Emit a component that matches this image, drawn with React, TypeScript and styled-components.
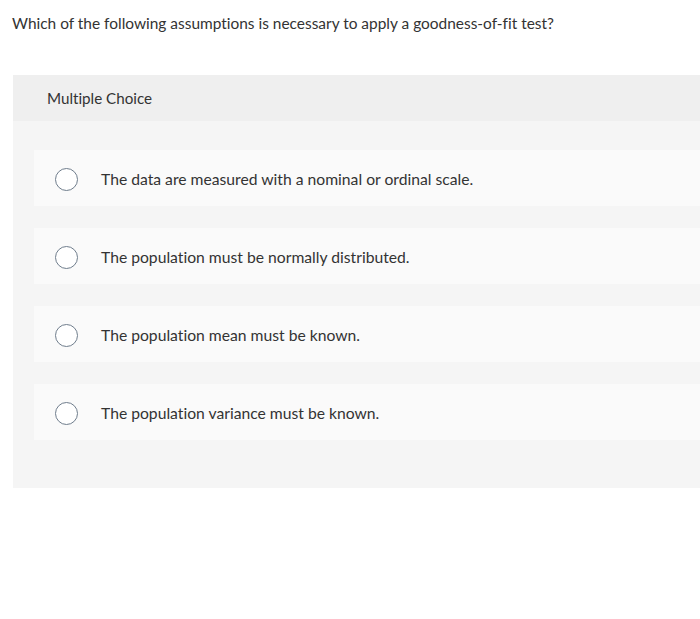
import styled, { createGlobalStyle } from 'styled-components';

const GlobalStyle = createGlobalStyle`
  body {
    margin: 0;
    background: #ffffff;
    font-family: Lato, "Open Sans", sans-serif;
    font-variant-ligatures: none;
    color: #333333;
  }
`;

const Page = styled.div`
  width: 700px;
  height: 619px;
  padding: 13px 0 0 12px;
  box-sizing: border-box;
`;

const Question = styled.p`
  margin: 0;
  font-size: 15.45px;
  line-height: 20px;
`;

const Panel = styled.section`
  margin: 42px 0 0 1px;
  background: #f5f5f5;
  padding-bottom: 48px;
`;

const PanelHeader = styled.div`
  background: #efefef;
  height: 46px;
  display: flex;
  align-items: center;
  padding-left: 34px;
  font-size: 15.2px;
`;

const Choices = styled.div`
  display: flex;
  flex-direction: column;
  gap: 22px;
  padding: 29px 0 0 21px;
`;

const Choice = styled.label`
  display: flex;
  align-items: center;
  height: 56px;
  background: #fafafa;
  padding-left: 21px;
  font-size: 15.7px;
  padding-top: 2px;
  box-sizing: border-box;
  cursor: pointer;
`;

const Radio = styled.span`
  width: 21px;
  height: 21px;
  border: 1.5px solid #6f7d8c;
  border-radius: 50%;
  background: #ffffff;
  flex-shrink: 0;
  margin-right: 23px;
`;

const options = [
  'The data are measured with a nominal or ordinal scale.',
  'The population must be normally distributed.',
  'The population mean must be known.',
  'The population variance must be known.',
];

const App = () => (
  <Page>
    <GlobalStyle />
    <Question>Which of the following assumptions is necessary to apply a goodness-of-fit test?</Question>
    <Panel>
      <PanelHeader>Multiple Choice</PanelHeader>
      <Choices>
        {options.map((text) => (
          <Choice key={text}>
            <Radio />
            {text}
          </Choice>
        ))}
      </Choices>
    </Panel>
  </Page>
);

export default App;
